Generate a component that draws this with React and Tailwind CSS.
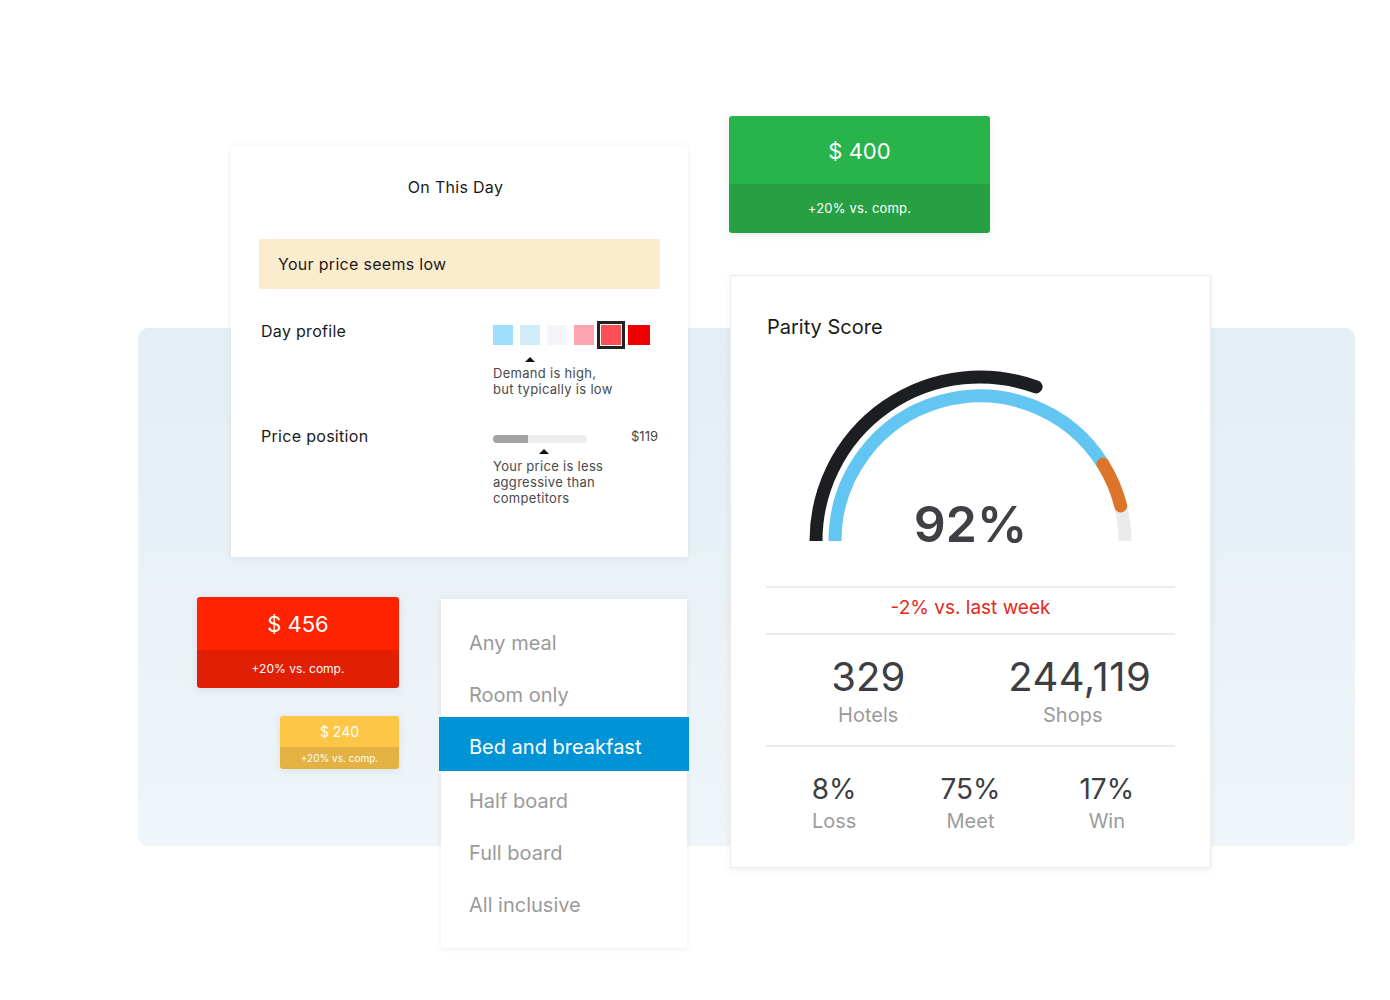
const swatches = ['#9fdffd', '#d0ecf7', '#f4f5f9', '#fda4b0']

function Arrow({ className }) {
  return (
    <div
      className={`w-0 h-0 border-x-[5px] border-x-transparent border-b-[5px] border-b-[#111] ${className}`}
    />
  )
}

function OnThisDay() {
  return (
    <div className="absolute left-[231px] top-[145px] w-[457px] h-[412px] bg-white px-[28px] pt-[30px] tracking-[0.3px] shadow-[0_1px_6px_rgba(0,0,0,0.07)]">
      <div className="text-center text-[16px] leading-6 text-[#1a1a1a] pr-[8px]">On This Day</div>

      <div className="mt-[40px] h-[50px] bg-[#fcecce] flex items-center px-[19px] text-[16px] text-[#1a1a1a]">
        Your price seems low
      </div>

      {/* Day profile */}
      <div className="mt-[30px] px-[2px] grid grid-cols-[232px_1fr]">
        <div className="text-[16px] leading-6 text-[#1a1a1a]">Day profile</div>
        <div className="pt-[6px]">
          <div className="flex items-center gap-[7px]">
            {swatches.map((c) => (
              <div key={c} className="w-[20px] h-[20px]" style={{ backgroundColor: c }} />
            ))}
            <div className="w-[20px] h-[20px] bg-[#fe4e55] ring-[3px] ring-[#222] ring-offset-1 ring-offset-white" />
            <div className="w-[22px] h-[20px] bg-[#ee0000]" />
          </div>
          <Arrow className="mt-[12px] ml-[32px]" />
          <div className="mt-[3px] text-[13px] leading-4 text-[#4a4a4a]">
            Demand is high,
            <br />
            but typically is low
          </div>
        </div>
      </div>

      {/* Price position */}
      <div className="mt-[27px] px-[2px] grid grid-cols-[232px_1fr]">
        <div className="text-[16px] leading-6 text-[#1a1a1a]">Price position</div>
        <div className="pt-[4px]">
          <div className="flex items-start justify-between">
            <div className="mt-[7px] w-[94px] h-[8px] rounded-full bg-[#ececee] overflow-hidden">
              <div className="w-[35px] h-full bg-[#a3a3a3]" />
            </div>
            <div className="text-[13px] leading-4 text-[#444] tracking-normal">$119</div>
          </div>
          <Arrow className="mt-[5px] ml-[46px]" />
          <div className="mt-[4px] text-[13px] leading-4 text-[#4a4a4a]">
            Your price is less
            <br />
            aggressive than
            <br />
            competitors
          </div>
        </div>
      </div>
    </div>
  )
}

function Gauge() {
  return (
    <div className="relative mt-[20px] h-[180px]">
      <svg width="410" height="180" viewBox="0 0 410 180" className="block">
        <path d="M50 180 A164 164 0 0 1 270.1 25.9" fill="none" stroke="#1d1e22" strokeWidth="13" strokeLinecap="round" />
        <path d="M354.69 144.92 A145 145 0 0 1 359 180" fill="none" stroke="#ebebed" strokeWidth="13" />
        <path d="M69 180 A145 145 0 0 1 336.97 103.16" fill="none" stroke="#63c6f2" strokeWidth="13" />
        <path d="M336.97 103.16 A145 145 0 0 1 354.69 144.92" fill="none" stroke="#dc752a" strokeWidth="13" strokeLinecap="round" />
      </svg>
      <div className="absolute left-0 right-0 top-[138px] text-center text-[50px] leading-[50px] font-semibold text-[#3f4045]">
        92%
      </div>
    </div>
  )
}

function Stat({ value, label, size }) {
  return (
    <div className="flex flex-col items-center">
      <div className={`${size} text-[#3d3e43]`}>{value}</div>
      <div className="mt-[6px] text-[20px] leading-6 text-[#9b9b9b]">{label}</div>
    </div>
  )
}

function ParityScore() {
  return (
    <div className="absolute left-[730px] top-[275px] w-[481px] h-[593px] bg-white px-[35px] pt-[37px] border border-[#ececec] shadow-[0_2px_8px_rgba(0,0,0,0.06)]">
      <div className="pl-[1px] text-[20px] leading-7 text-[#1a1a1a]">Parity Score</div>
      <Gauge />
      <div className="mt-[45px] h-[2px] bg-[#ececec]" />
      <div className="h-[45px] flex items-center justify-center pb-[4px] text-[19px] text-[#e8271a]">-2% vs. last week</div>
      <div className="h-[2px] bg-[#ececec]" />
      <div className="pt-[22px] pb-[18px] grid grid-cols-2">
        <Stat value="329" label="Hotels" size="text-[40px] leading-[40px]" />
        <Stat value="244,119" label="Shops" size="text-[40px] leading-[40px] tracking-[0.5px] ml-[14px]" />
      </div>
      <div className="h-[2px] bg-[#ececec]" />
      <div className="pt-[28px] grid grid-cols-3">
        <Stat value="8%" label="Loss" size="text-[28px] leading-[28px]" />
        <Stat value="75%" label="Meet" size="text-[28px] leading-[28px]" />
        <Stat value="17%" label="Win" size="text-[28px] leading-[28px]" />
      </div>
    </div>
  )
}

const meals = [
  { name: 'Any meal', cls: 'h-[52px]' },
  { name: 'Room only', cls: 'h-[48px] pt-[4px]' },
  { name: 'Bed and breakfast', cls: 'h-[54px] pt-[6px]', active: true },
  { name: 'Half board', cls: 'h-[56px] pt-[4px]' },
  { name: 'Full board', cls: 'h-[52px]' },
  { name: 'All inclusive', cls: 'h-[52px]' },
]

function MealMenu() {
  return (
    <div className="absolute left-[441px] top-[599px] w-[246px] h-[349px] bg-white pt-[18px] shadow-[0_1px_6px_rgba(0,0,0,0.08)]">
      {meals.map((m) =>
        m.active ? (
          <div key={m.name} className={`-mx-[2px] bg-[#0094d6] text-white flex items-center pl-[30px] text-[20px] ${m.cls}`}>
            {m.name}
          </div>
        ) : (
          <div key={m.name} className={`flex items-center pl-[28px] text-[20px] text-[#9a9a9a] ${m.cls}`}>
            {m.name}
          </div>
        )
      )}
    </div>
  )
}

export default function App() {
  return (
    <div className="relative w-[1390px] h-[1000px] bg-white overflow-hidden font-[Inter,sans-serif]">
      {/* backdrop */}
      <div className="absolute left-[138px] top-[328px] w-[1217px] h-[518px] rounded-[10px] bg-gradient-to-b from-[#e3eef5] to-[#eff5f9]" />

      <OnThisDay />

      <div className="absolute left-[729px] top-[116px] w-[261px] rounded-[3px] overflow-hidden text-white shadow-[0_2px_8px_rgba(0,0,0,0.08)]">
        <div className="h-[68px] bg-[#28b44a] flex items-center justify-center text-[22px] pt-[2px]">$ 400</div>
        <div className="h-[49px] bg-[#27a043] flex items-center justify-center text-[13px] tracking-[0.2px]">+20% vs. comp.</div>
      </div>

      <ParityScore />

      <div className="absolute left-[197px] top-[597px] w-[202px] rounded-[3px] overflow-hidden text-white shadow-[0_2px_8px_rgba(0,0,0,0.08)]">
        <div className="h-[53px] bg-[#ff2200] flex items-center justify-center text-[22px] pt-[2px]">$ 456</div>
        <div className="h-[38px] bg-[#e01f05] flex items-center justify-center text-[12px]">+20% vs. comp.</div>
      </div>

      <div className="absolute left-[280px] top-[716px] w-[119px] rounded-[3px] overflow-hidden text-white shadow-[0_2px_8px_rgba(0,0,0,0.08)]">
        <div className="h-[31px] bg-[#fdc646] flex items-center justify-center text-[14px]">$ 240</div>
        <div className="h-[22px] bg-[#e4b143] flex items-center justify-center text-[10px]">+20% vs. comp.</div>
      </div>

      <MealMenu />
    </div>
  )
}
